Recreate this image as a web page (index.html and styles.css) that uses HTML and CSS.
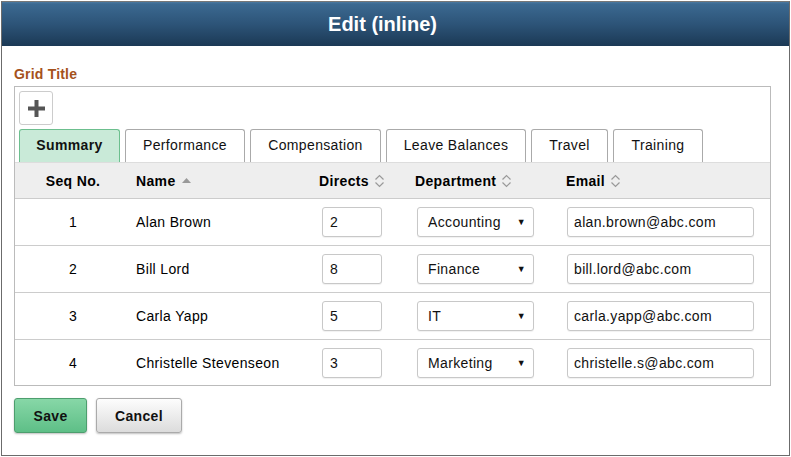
FILE: index.html
```html
<!DOCTYPE html>
<html>
<head>
<meta charset="utf-8">
<link rel="stylesheet" href="styles.css">
</head>
<body>
<div class="frame">
  <div class="titlebar">Edit (inline)</div>
  <div class="content">
    <div class="grid-title">Grid Title</div>
    <div class="grid">
      <div class="toolbar">
        <button class="add-btn" aria-label="Add">
          <svg width="17" height="17" viewBox="0 0 17 17"><rect x="6.5" y="0" width="4" height="17" fill="#555"/><rect x="0" y="6.5" width="17" height="4" fill="#555"/></svg>
        </button>
      </div>
      <div class="tabs">
        <div class="tab active t1">Summary</div>
        <div class="tab t2">Performance</div>
        <div class="tab t3">Compensation</div>
        <div class="tab t4">Leave Balances</div>
        <div class="tab t5">Travel</div>
        <div class="tab t6">Training</div>
      </div>
      <div class="row head">
        <div class="c c1">Seq No.</div>
        <div class="c c2">Name <svg class="sort" width="11" height="8" viewBox="0 0 11 8"><path d="M5.5 1 L10 6 L1 6 Z" fill="#999"/></svg></div>
        <div class="c c3">Directs <svg class="sort" width="11" height="14" viewBox="0 0 11 14"><path d="M1.5 5.5 L5.5 1.5 L9.5 5.5 M1.5 8.5 L5.5 12.5 L9.5 8.5" fill="none" stroke="#999" stroke-width="1.2"/></svg></div>
        <div class="c c4">Department <svg class="sort" width="11" height="14" viewBox="0 0 11 14"><path d="M1.5 5.5 L5.5 1.5 L9.5 5.5 M1.5 8.5 L5.5 12.5 L9.5 8.5" fill="none" stroke="#999" stroke-width="1.2"/></svg></div>
        <div class="c c5">Email <svg class="sort" width="11" height="14" viewBox="0 0 11 14"><path d="M1.5 5.5 L5.5 1.5 L9.5 5.5 M1.5 8.5 L5.5 12.5 L9.5 8.5" fill="none" stroke="#999" stroke-width="1.2"/></svg></div>
      </div>
      <div class="row">
        <div class="c c1">1</div>
        <div class="c c2">Alan Brown</div>
        <div class="c c3"><div class="input num">2</div></div>
        <div class="c c4"><div class="select"><span>Accounting</span><span class="arrow">▼</span></div></div>
        <div class="c c5"><div class="input email">alan.brown@abc.com</div></div>
      </div>
      <div class="row">
        <div class="c c1">2</div>
        <div class="c c2">Bill Lord</div>
        <div class="c c3"><div class="input num">8</div></div>
        <div class="c c4"><div class="select"><span>Finance</span><span class="arrow">▼</span></div></div>
        <div class="c c5"><div class="input email">bill.lord@abc.com</div></div>
      </div>
      <div class="row">
        <div class="c c1">3</div>
        <div class="c c2">Carla Yapp</div>
        <div class="c c3"><div class="input num">5</div></div>
        <div class="c c4"><div class="select"><span>IT</span><span class="arrow">▼</span></div></div>
        <div class="c c5"><div class="input email">carla.yapp@abc.com</div></div>
      </div>
      <div class="row last">
        <div class="c c1">4</div>
        <div class="c c2">Christelle Stevenseon</div>
        <div class="c c3"><div class="input num">3</div></div>
        <div class="c c4"><div class="select"><span>Marketing</span><span class="arrow">▼</span></div></div>
        <div class="c c5"><div class="input email">christelle.s@abc.com</div></div>
      </div>
    </div>
    <div class="actions">
      <button class="btn save">Save</button>
      <button class="btn cancel">Cancel</button>
    </div>
  </div>
</div>
</body>
</html>
```
FILE: styles.css
```css
* { box-sizing: border-box; }
html, body { margin: 0; padding: 0; background: #fff; }
body {
  font-family: "Liberation Sans", Arial, sans-serif;
  font-size: 14px;
  letter-spacing: 0.35px;
  color: #000;
}
.frame {
  margin: 1px 0 0 1px;
  width: 789px;
  height: 455px;
  border: 1px solid #6b6b6b;
  border-top-color: #777;
}
.titlebar {
  height: 44px;
  background: linear-gradient(#4a7aa2 0px, #3b6991 2px, #2d5478 22px, #1b3955 44px);
  color: #fff;
  font-size: 20px;
  font-weight: bold;
  letter-spacing: 0;
  text-align: center;
  line-height: 44px;
  padding-right: 26px;
}
.content { padding: 0 0 0 12px; }
.grid-title {
  color: #a5521c;
  font-weight: bold;
  font-size: 14px;
  letter-spacing: 0.2px;
  line-height: 16px;
  margin-top: 20px;
  height: 20px;
}
.grid {
  width: 757px;
  border: 1px solid #bbb;
}
.toolbar { padding: 4px 0 0 4px; height: 42px; }
.add-btn {
  width: 34px;
  height: 34px;
  border: 1px solid #ccc;
  border-radius: 3px;
  background: #fff;
  display: flex;
  align-items: center;
  justify-content: center;
  padding: 0;
}
.tabs {
  display: flex;
  padding-left: 4px;
  height: 33px;
  align-items: flex-end;
}
.tab {
  height: 33px;
  border: 1px solid #aaa;
  border-bottom: none;
  border-radius: 3px 3px 0 0;
  background: #fff;
  display: flex;
  align-items: center;
  justify-content: center;
  padding-bottom: 2px;
  color: #111;
  margin-right: 5px;
}
.tab.active {
  background: #c9ead8;
  border-color: #6cbf8e;
  font-weight: bold;
}
.t1 { width: 101px; margin-right: 5px; }
.t2 { width: 120px; }
.t3 { width: 131px; }
.t4 { width: 140px; }
.t5 { width: 77px; margin-right: 5px; }
.t6 { width: 90px; }
.row {
  display: grid;
  grid-template-columns: 116px 183px 96px 151px 1fr;
  height: 47px;
  border-top: 1px solid #ccc;
  align-items: center;
}
.row.last { height: 46px; }
.row.head {
  height: 36px;
  background: #eee;
  font-weight: bold;
  border-top: 1px solid #ddd;
}
.c { display: flex; align-items: center; height: 100%; }
.c1 { justify-content: center; }
.c2 { padding-left: 5px; }
.row.head .c { padding-top: 1px; }
.sort { margin-left: 5px; }
.row .c3 { padding-left: 8px; }
.row .c4 { padding-left: 7px; }
.row .c5 { padding-left: 6px; }
.row.head .c3, .row.head .c4, .row.head .c5 { padding-left: 5px; }
.input, .select {
  height: 30px;
  border: 1px solid #c8c8c8;
  border-radius: 3px;
  background: #fff;
  box-shadow: 0 1px 1px rgba(0,0,0,0.06);
  display: flex;
  align-items: center;
  padding-left: 7px;
  color: #111;
}
.num { width: 60px; }
.email { width: 187px; padding-left: 6px; }
.select {
  width: 117px;
  padding: 0 7px 0 10px;
  justify-content: space-between;
}
.arrow { font-size: 9px; color: #111; }
.actions {
  display: flex;
  gap: 9px;
  margin-top: 12px;
}
.btn {
  height: 35px;
  border-radius: 3px;
  font-family: "Liberation Sans", Arial, sans-serif;
  font-size: 14px;
  font-weight: bold;
  letter-spacing: 0.35px;
  color: #111;
  padding: 0;
  box-shadow: 0 1px 2px rgba(0,0,0,0.25);
}
.save {
  width: 73px;
  border: 1px solid #4d9e6e;
  background: linear-gradient(#87d7a7, #5ebf87);
}
.cancel {
  width: 86px;
  border: 1px solid #aaa;
  background: linear-gradient(#fdfdfd, #dcdcdc);
}
```
